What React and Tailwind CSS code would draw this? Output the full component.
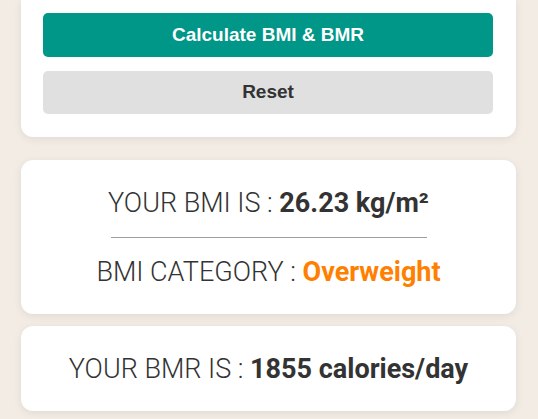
export default function App() {
  return (
    <div className="min-h-[419px] w-[538px] bg-[#f3ece4] pl-[21px] pr-[22px]" style={{ fontFamily: "Roboto, sans-serif" }}>
      <div className="rounded-b-xl bg-white pl-[22px] pr-[23px] pb-[23px] pt-[13px] shadow-[0_2px_8px_rgba(0,0,0,0.08)]">
        <button className="flex h-[44px] w-full items-center justify-center rounded-[5px] bg-[#009688] text-[19px] font-bold text-white" style={{ fontFamily: "'Liberation Sans', Arial, sans-serif" }}>
          Calculate BMI &amp; BMR
        </button>
        <button className="mt-[14px] flex h-[43px] w-full items-center justify-center rounded-[5px] bg-[#e0e0e0] text-[19px] font-bold text-[#333]" style={{ fontFamily: "'Liberation Sans', Arial, sans-serif" }}>
          Reset
        </button>
      </div>
      <div className="mt-[23px] flex h-[154px] flex-col items-center rounded-xl bg-white shadow-[0_2px_8px_rgba(0,0,0,0.08)]">
        <div className="mt-[27px] whitespace-nowrap text-[27px] font-light leading-[32px] text-[#333]">
          YOUR BMI IS : <span className="font-bold">26.23 kg/m²</span>
        </div>
        <div className="mt-[18px] h-px w-[316px] bg-[#9e9e9e]" />
        <div className="mt-[18px] whitespace-nowrap text-[27px] font-light leading-[32px] text-[#333]">
          BMI CATEGORY : <span className="font-bold text-[#ff7f00]">Overweight</span>
        </div>
      </div>
      <div className="mt-[12px] flex h-[85px] items-center justify-center rounded-xl bg-white shadow-[0_2px_8px_rgba(0,0,0,0.08)]">
        <div className="whitespace-nowrap text-[27px] font-light leading-[32px] text-[#333]">
          YOUR BMR IS : <span className="font-bold">1855 calories/day</span>
        </div>
      </div>
    </div>
  );
}
